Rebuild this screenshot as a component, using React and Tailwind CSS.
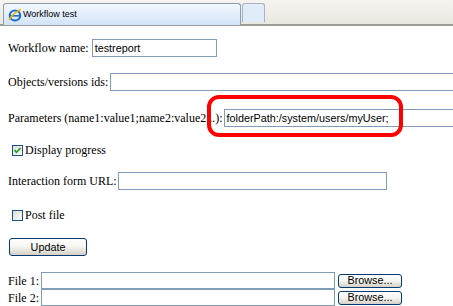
import React from "react";

const serif = { fontFamily: '"Liberation Serif", "Times New Roman", serif' };

function Input({ w, value = "", className = "" }) {
  return (
    <div
      className={`h-full border border-[#7f9db9] bg-white flex items-center pl-[2px] text-[10.8px] text-black whitespace-nowrap overflow-hidden shrink-0 ${className}`}
      style={{ width: w, fontFamily: '"Liberation Sans", Arial, sans-serif' }}
    >
      {value}
    </div>
  );
}

function Checkbox({ checked }) {
  return (
    <div className="w-[11px] h-[11px] border border-[#1c5180] bg-gradient-to-br from-[#dcdcd7] to-[#ffffff] flex items-center justify-center shrink-0">
      {checked && (
        <svg width="9" height="9" viewBox="0 0 9 9">
          <path d="M1.5 4.2 L3.5 6.3 L7.5 2" fill="none" stroke="#21a121" strokeWidth="1.7" />
        </svg>
      )}
    </div>
  );
}

function XPButton({ w, h, children }) {
  return (
    <div
      className="border border-[#003c74] rounded-[3px] bg-gradient-to-b from-[#ffffff] via-[#f4f4f0] to-[#d6d0c5] flex items-center justify-center text-[10.8px] text-black shrink-0"
      style={{ width: w, height: h, fontFamily: '"Liberation Sans", Arial, sans-serif' }}
    >
      {children}
    </div>
  );
}

function IEIcon() {
  return (
    <svg width="14" height="14" viewBox="0 0 14 14">
      <ellipse cx="7" cy="7.5" rx="5.2" ry="5" fill="none" stroke="#1a6fd1" strokeWidth="2.2" />
      <rect x="3" y="7" width="8" height="1.6" fill="#1a6fd1" />
      <path d="M1 12 C3 9 8 3 13 1.5" fill="none" stroke="#f0b400" strokeWidth="1.4" />
    </svg>
  );
}

export default function App() {
  return (
    <div className="w-[453px] h-[306px] bg-white overflow-hidden relative">
      {/* tab bar */}
      <div className="h-[26px] bg-gradient-to-b from-[#f5f4ef] to-[#e9e8e0] border-b-2 border-[#9d9d98] flex items-end pl-[3px] gap-[1px]">
        <div className="w-[238px] h-[22px] rounded-t-[3px] border border-b-0 border-[#8e9cae] bg-gradient-to-b from-[#f3f8fe] to-[#d2e3f8] flex items-center pl-[4px] gap-[1px] mb-[-1px]">
          <IEIcon />
          <span className="text-[9px] text-black" style={{ fontFamily: '"Liberation Sans", Tahoma, sans-serif' }}>
            Workflow test
          </span>
        </div>
        <div className="w-[23px] h-[19px] rounded-t-[3px] border border-b-0 border-[#a8b3c1] bg-[#e1ecfa] mb-[2px]" />
      </div>

      <div className="pl-[8px] flex flex-col text-[12px] text-black" style={serif}>
        <div className="flex items-center h-[18px] mt-[13px] gap-[3px]">
          <span>Workflow name:</span>
          <Input w={125} value="testreport" />
        </div>
        <div className="flex items-center h-[18px] mt-[16px] gap-[2px]">
          <span className="whitespace-nowrap">Objects/versions ids:</span>
          <Input w={360} />
        </div>
        <div className="flex items-center h-[18px] mt-[18px] gap-[1px]">
          <span className="whitespace-nowrap">Parameters (name1:value1;name2:value2...):</span>
          <Input w={250} value="folderPath:/system/users/myUser;" />
        </div>
        <div className="flex items-center h-[20px] mt-[13px] gap-[2px] pl-[4px]">
          <Checkbox checked />
          <span>Display progress</span>
        </div>
        <div className="flex items-center h-[18px] mt-[12px] gap-[1px]">
          <span className="whitespace-nowrap">Interaction form URL:</span>
          <Input w={269} />
        </div>
        <div className="flex items-center h-[20px] mt-[15px] gap-[2px] pl-[4px]">
          <Checkbox />
          <span>Post file</span>
        </div>
        <div className="flex items-center h-[18px] mt-[13px] pl-[1px]">
          <XPButton w={78} h={18}>Update</XPButton>
        </div>
        <div className="flex items-center h-[17px] mt-[16px] gap-[3px]">
          <span className="w-[30px] whitespace-nowrap">File 1:</span>
          <Input w={294} />
          <XPButton w={64} h={14}>Browse...</XPButton>
        </div>
        <div className="flex items-center h-[17px] gap-[3px]">
          <span className="w-[30px] whitespace-nowrap">File 2:</span>
          <Input w={294} />
          <XPButton w={64} h={14}>Browse...</XPButton>
        </div>
      </div>

      {/* red annotation */}
      <div className="absolute left-[207px] top-[95px] w-[196px] h-[42px] border-[4px] border-[#ff0000] rounded-[12px] pointer-events-none" />
    </div>
  );
}
